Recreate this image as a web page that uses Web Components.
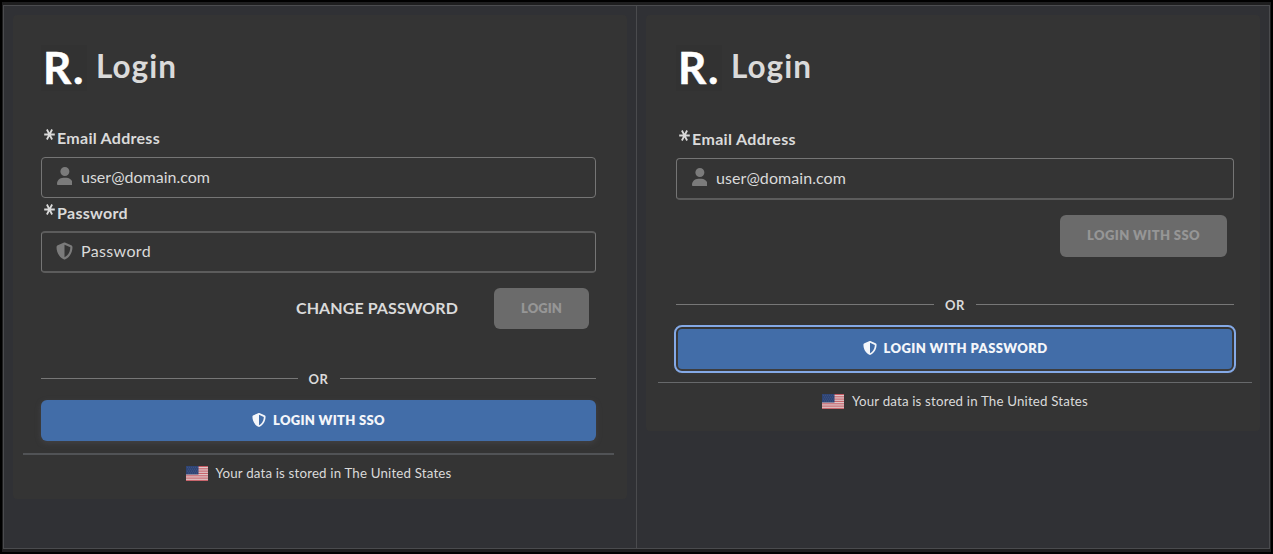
<!DOCTYPE html>
<html lang="en">
<head>
<meta charset="utf-8">
<title>Login</title>
<style>
  body {
    margin: 0;
    background: #000;
    font-family: Lato, "Noto Sans", sans-serif;
    color: #dadada;
  }
</style>
</head>
<body>
<login-compare>
  <login-card slot="left" style="--x: 28px; --pad-right: 31px; --hr-left: 10px; --hr-right: 13px; --bottom: 18px">
    <login-field label="Email Address" label-width="103" value="user@domain.com" text-width="129" icon="user" style="--field: 41px; margin-top: 39px"></login-field>
    <login-field label="Password" label-width="71" value="Password" text-width="70" icon="shield" style="--field: 42px; --edge-top: 2px solid #5c5c5c; --edge-bottom: 2px solid #5c5c5c; --label: 26px; margin-top: 7px"></login-field>
    <div slot="actions" style="display: flex; align-items: center; justify-content: flex-end; gap: 36px; padding: 15px 7px 0 0; height: 41px">
      <fit-text width="162" style="font-size: 16px; font-weight: 700; margin-top: -3px">CHANGE PASSWORD</fit-text>
      <login-button disabled text="LOGIN" text-width="41" style="width: 95px"></login-button>
    </div>
    <or-divider slot="other" style="margin-top: 40px"></or-divider>
    <login-button slot="other" icon text="LOGIN WITH SSO" text-width="112" style="margin-top: 12px"></login-button>
    <data-region slot="region" style="margin-top: 12px; --line: 2px; --line-color: #515356"></data-region>
  </login-card>
  <login-card slot="right" style="--x: 30px; --pad-right: 26px; --hr-left: 12px; --hr-right: 8px; --bottom: 22px">
    <login-field label="Email Address" label-width="104" value="user@domain.com" text-width="130" icon="user" style="--field: 42px; --edge-bottom: 2px solid #5c5c5c; margin-top: 40px"></login-field>
    <div slot="actions" style="display: flex; justify-content: flex-end; padding: 15px 7px 0 0; height: 42px">
      <login-button disabled text="LOGIN WITH SSO" text-width="113" style="width: 167px; height: 42px; padding-bottom: 2px"></login-button>
    </div>
    <or-divider slot="other" style="margin-top: 38px"></or-divider>
    <login-button slot="other" icon focused text="LOGIN WITH PASSWORD" text-width="164" style="margin-top: 15px"></login-button>
    <data-region slot="region" style="margin-top: 13px"></data-region>
  </login-card>
</login-compare>

<script>
const shieldIcon = `<svg viewBox="0 0 512 512"><path fill="currentColor" d="M256 0c5 0 9 1 13 3l189 80c22 9 38 31 38 57 0 99-41 281-214 363-16 8-36 8-52 0C57 421 16 239 16 140c0-26 16-48 38-57L243 3c4-2 8-3 13-3zm0 67v378c138-67 175-215 176-303z"/></svg>`;
const userIcon = `<svg viewBox="0 0 448 512"><path fill="currentColor" d="M224 256a128 128 0 1 0 0-256 128 128 0 0 0 0 256zm-46 48C80 304 0 384 0 482c0 17 13 30 30 30h388c17 0 30-13 30-30 0-98-80-178-178-178z"/></svg>`;

// Single line of text, tracked so that it takes up the given width
class FitText extends HTMLElement {
  constructor() {
    super();
    this.attachShadow({ mode: "open" });
    this.shadowRoot.innerHTML = `
      <style>
        :host { display: inline-block; white-space: nowrap; }
        span { display: inline-block; }
      </style>
      <span><slot></slot></span>`;
  }

  connectedCallback() {
    const span = this.shadowRoot.querySelector("span");
    const target = Number(this.getAttribute("width"));
    const natural = span.getBoundingClientRect().width;
    if (!target || !natural) return;
    span.style.letterSpacing = (target - natural) / this.textContent.length + "px";
    this.style.width = target + "px";
  }
}

class LoginCompare extends HTMLElement {
  constructor() {
    super();
    this.attachShadow({ mode: "open" });
    this.shadowRoot.innerHTML = `
      <style>
        :host {
          display: block;
          box-sizing: border-box;
          width: 1273px;
          height: 554px;
          border: 2px solid #000;
          padding: 3px 1px;
          background: #1e1e1f;
        }
        .table {
          display: flex;
          box-sizing: border-box;
          height: 544px;
          border: 1px solid #4a4b4e;
          background: #303135;
        }
        .cell {
          box-sizing: border-box;
          padding: 9px;
        }
        .cell:first-child {
          width: 633px;
          border-right: 1px solid #4a4b4e;
        }
        .cell:last-child { flex: 1; }
      </style>
      <div class="table">
        <div class="cell"><slot name="left"></slot></div>
        <div class="cell"><slot name="right"></slot></div>
      </div>`;
  }
}

class LoginCard extends HTMLElement {
  constructor() {
    super();
    this.attachShadow({ mode: "open" });
    this.shadowRoot.innerHTML = `
      <style>
        :host {
          display: block;
          box-sizing: border-box;
          background: #343434;
          border-radius: 4px;
          padding: 30px 0 var(--bottom);
        }
        .body { padding: 0 var(--pad-right) 0 var(--x); }
        .head {
          display: flex;
          height: 46px;
        }
        .logo {
          width: 46px;
          box-sizing: border-box;
          padding-left: 2px;
          background: #323232;
          color: #fff;
          font-size: 44px;
          font-weight: 700;
          line-height: 45px;
          -webkit-text-stroke: .5px #fff;
        }
        .title {
          margin-left: 9px;
          font-size: 31.5px;
          font-weight: 700;
          line-height: 42px;
        }
        .region { padding: 0 var(--hr-right) 0 var(--hr-left); }
      </style>
      <div class="body">
        <div class="head">
          <div class="logo"><fit-text width="42">R.</fit-text></div>
          <div class="title"><fit-text width="81">Login</fit-text></div>
        </div>
        <slot></slot>
        <slot name="actions"></slot>
        <slot name="other"></slot>
      </div>
      <div class="region"><slot name="region"></slot></div>`;
  }
}

class LoginField extends HTMLElement {
  connectedCallback() {
    this.attachShadow({ mode: "open" });
    const icon = this.getAttribute("icon");
    this.shadowRoot.innerHTML = `
      <style>
        :host { display: block; }
        .label {
          display: flex;
          height: var(--label, 27px);
          padding-left: 3px;
          font-size: 16px;
          font-weight: 700;
          line-height: 16px;
        }
        .label svg {
          width: 11px;
          height: 11px;
          margin: -1px 2px 0 0;
        }
        .box {
          display: flex;
          align-items: center;
          box-sizing: border-box;
          height: var(--field);
          border: 1px solid #757575;
          border-top: var(--edge-top, 1px solid #757575);
          border-bottom: var(--edge-bottom, 1px solid #757575);
          border-radius: 4px;
          padding: 0 0 1px 15px;
          font-size: 16px;
        }
        .box fit-text { margin-top: -2px; }
        .icon {
          display: flex;
          width: 17px;
          margin: -2px 8px 0 -1px;
          justify-content: center;
          color: #7b7b7b;
        }
        .icon svg { height: 18px; }
      </style>
      <div class="label">
        <svg viewBox="0 0 11 11"><path d="M.2 5.5h10.6M2.9.5l5.2 10M8.1.5l-5.2 10" stroke="currentColor" stroke-width="1.8"/></svg>
        <fit-text width="${this.getAttribute("label-width")}">${this.getAttribute("label")}</fit-text>
      </div>
      <div class="box">
        <span class="icon">${icon === "user" ? userIcon : shieldIcon}</span>
        <fit-text width="${this.getAttribute("text-width")}">${this.getAttribute("value")}</fit-text>
      </div>`;
  }
}

class LoginButton extends HTMLElement {
  connectedCallback() {
    this.attachShadow({ mode: "open" });
    this.shadowRoot.innerHTML = `
      <style>
        :host {
          display: flex;
          align-items: center;
          justify-content: center;
          box-sizing: border-box;
          height: 41px;
          border-radius: 6px;
          padding-bottom: 1px;
          background: #426da8;
          color: #f4f6fa;
          font-size: 13px;
          font-weight: 800;
          box-shadow: 0 2px 6px rgba(100, 100, 110, .3);
        }
        :host([disabled]) {
          background: #6b6b6b;
          color: #969696;
          box-shadow: none;
        }
        :host([focused]) {
          height: 40px;
          padding-bottom: 2px;
          margin-left: 2px;
          margin-right: 2px;
          border-radius: 4px;
          outline: 2px solid #84a9e6;
          outline-offset: 2px;
        }
        svg {
          width: 14px;
          height: 14px;
          margin-right: 7px;
        }
      </style>
      ${this.hasAttribute("icon") ? shieldIcon : ""}
      <fit-text width="${this.getAttribute("text-width")}">${this.getAttribute("text")}</fit-text>`;
  }
}

class OrDivider extends HTMLElement {
  constructor() {
    super();
    this.attachShadow({ mode: "open" });
    this.shadowRoot.innerHTML = `
      <style>
        :host {
          display: flex;
          align-items: center;
          height: 19px;
          gap: 11px;
          font-size: 13px;
          font-weight: 700;
        }
        i {
          flex: 1;
          height: 1px;
          background: #777;
        }
      </style>
      <i></i><fit-text width="20">OR</fit-text><i></i>`;
  }
}

class DataRegion extends HTMLElement {
  constructor() {
    super();
    this.attachShadow({ mode: "open" });
    this.shadowRoot.innerHTML = `
      <style>
        :host {
          display: block;
          border-top: var(--line, 1px) solid var(--line-color, #67696b);
        }
        .row {
          display: flex;
          align-items: center;
          justify-content: center;
          height: 16px;
          padding-top: 10px;
          font-size: 13.3px;
        }
        svg {
          width: 22px;
          height: 15px;
          margin: 1px 8px 0 0;
        }
      </style>
      <div class="row">
        <svg viewBox="0 0 22 15">
          <path fill="#dfc6c8" d="M0 0h22v15H0z"/>
          <path stroke="#bd3d48" stroke-width=".8" d="M0 .5h22M0 2.8h22M0 5.1h22M0 7.4h22M0 9.8h22M0 12.1h22M0 14.4h22"/>
          <path fill="#2e4475" d="M0 0h12.5v8.5H0z"/>
          <path stroke="#62759d" stroke-width=".5" stroke-dasharray=".8 1.2" d="M1 1.3h11M2 3.2h10M1 5.1h11M2 7h10"/>
        </svg>
        <fit-text width="236">Your data is stored in The United States</fit-text>
      </div>`;
  }
}

customElements.define("fit-text", FitText);
customElements.define("login-compare", LoginCompare);
customElements.define("login-card", LoginCard);
customElements.define("login-field", LoginField);
customElements.define("login-button", LoginButton);
customElements.define("or-divider", OrDivider);
customElements.define("data-region", DataRegion);
</script>
</body>
</html>
